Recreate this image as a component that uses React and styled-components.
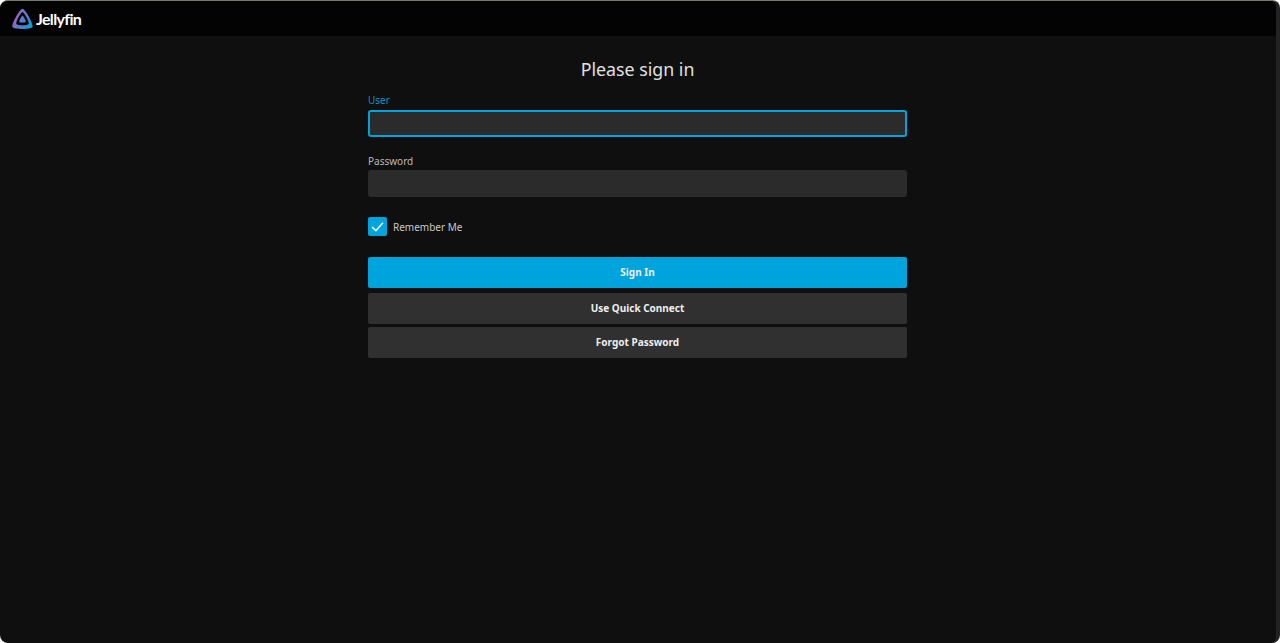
import React from 'react'
import styled, { createGlobalStyle } from 'styled-components'

const Global = createGlobalStyle`
  html, body { margin: 0; height: 100%; background: #fff; }
  #root { height: 100%; }
  * { box-sizing: border-box; }
`

const Page = styled.div`
  height: 643px;
  display: flex;
  flex-direction: column;
  background: #0f0f0f;
  border-top: 1px solid #77776a;
  border-right: 4px solid #222;
  border-radius: 8px;
  overflow: hidden;
  font-family: "Noto Sans", sans-serif;
  color: #d6d6d6;
`
const Header = styled.header`
  height: 35px;
  flex: none;
  display: flex;
  align-items: center;
  padding-left: 12px;
  gap: 3px;
  background: #030303;
`
const Brand = styled.span`
  font-family: "Lato", sans-serif;
  font-size: 16px;
  font-weight: 700;
  letter-spacing: -0.65px;
  color: #fff;
`
const Main = styled.main`
  padding-right: 1px;
`
const Form = styled.form`
  width: 539px;
  margin: 0 auto;
  padding-top: 19px;
  display: flex;
  flex-direction: column;
`
const Title = styled.h1`
  margin: 0 0 10px;
  font-size: 17.8px;
  font-weight: 400;
  line-height: 28px;
  text-align: center;
  color: #e0e0e0;
`
const Field = styled.div`
  display: flex;
  flex-direction: column;
  margin-bottom: ${({ $gap }) => $gap}px;
`
const Label = styled.label`
  font-size: 10px;
  line-height: 15px;
  margin-bottom: ${({ $focused }) => ($focused ? 2 : 1)}px;
  color: ${({ $focused }) => ($focused ? '#0098cc' : '#b8b8b8')};
`
const Input = styled.div`
  height: 27px;
  background: #2b2b2b;
  border-radius: 3px;
  border: ${({ $focused }) => ($focused ? '2px solid #00a4dc' : 'none')};
`
const CheckRow = styled.div`
  display: flex;
  align-items: center;
  gap: 6px;
  margin: 4px 0 21px;
  font-size: 10px;
  color: #c8c8c8;
`
const Box = styled.span`
  width: 19px;
  height: 19px;
  border-radius: 2px;
  background: #00a4dc;
  display: flex;
  align-items: center;
  justify-content: center;
`
const Button = styled.button`
  height: 31px;
  padding: 0 0 2px;
  margin-bottom: ${({ $gap }) => $gap}px;
  border: none;
  border-radius: 2px;
  background: ${({ $primary }) => ($primary ? '#00a4dc' : '#303030')};
  color: #eee;
  font-family: inherit;
  font-size: 10px;
  font-weight: 700;
`

const Logo = () => (
  <svg width="21" height="21" viewBox="0 0 512 512">
    <defs>
      <linearGradient id="jf" x1="30" y1="200" x2="500" y2="470" gradientUnits="userSpaceOnUse">
        <stop offset="0" stopColor="#aa5cc3" />
        <stop offset="1" stopColor="#00a4dc" />
      </linearGradient>
    </defs>
    <path
      fill="url(#jf)"
      fillRule="evenodd"
      d="M256 18C190 18 -20 400 12 464c32 64 456 64 488 0C532 400 322 18 256 18ZM256 100c40 0 170 246 150 288-20 40-280 40-300 0C86 346 216 100 256 100Z"
    />
    <path
      fill="url(#jf)"
      d="M256 190c-22 0-90 126-78 150 12 22 144 22 156 0 12-24-56-150-78-150Z"
    />
  </svg>
)

const Check = () => (
  <svg width="13" height="13" viewBox="0 0 24 24" fill="none" stroke="#fff" strokeWidth="2.6">
    <path d="M2 13l7 7L22 5" />
  </svg>
)

export default function App() {
  return (
    <>
      <Global />
      <Page>
        <Header>
          <Logo />
          <Brand>Jellyfin</Brand>
        </Header>
        <Main>
          <Form>
            <Title>Please sign in</Title>
            <Field $gap={17}>
              <Label $focused>User</Label>
              <Input $focused />
            </Field>
            <Field $gap={16}>
              <Label>Password</Label>
              <Input />
            </Field>
            <CheckRow>
              <Box><Check /></Box>
              Remember Me
            </CheckRow>
            <Button type="button" $primary $gap={5}>Sign In</Button>
            <Button type="button" $gap={3}>Use Quick Connect</Button>
            <Button type="button" $gap={0}>Forgot Password</Button>
          </Form>
        </Main>
      </Page>
    </>
  )
}
